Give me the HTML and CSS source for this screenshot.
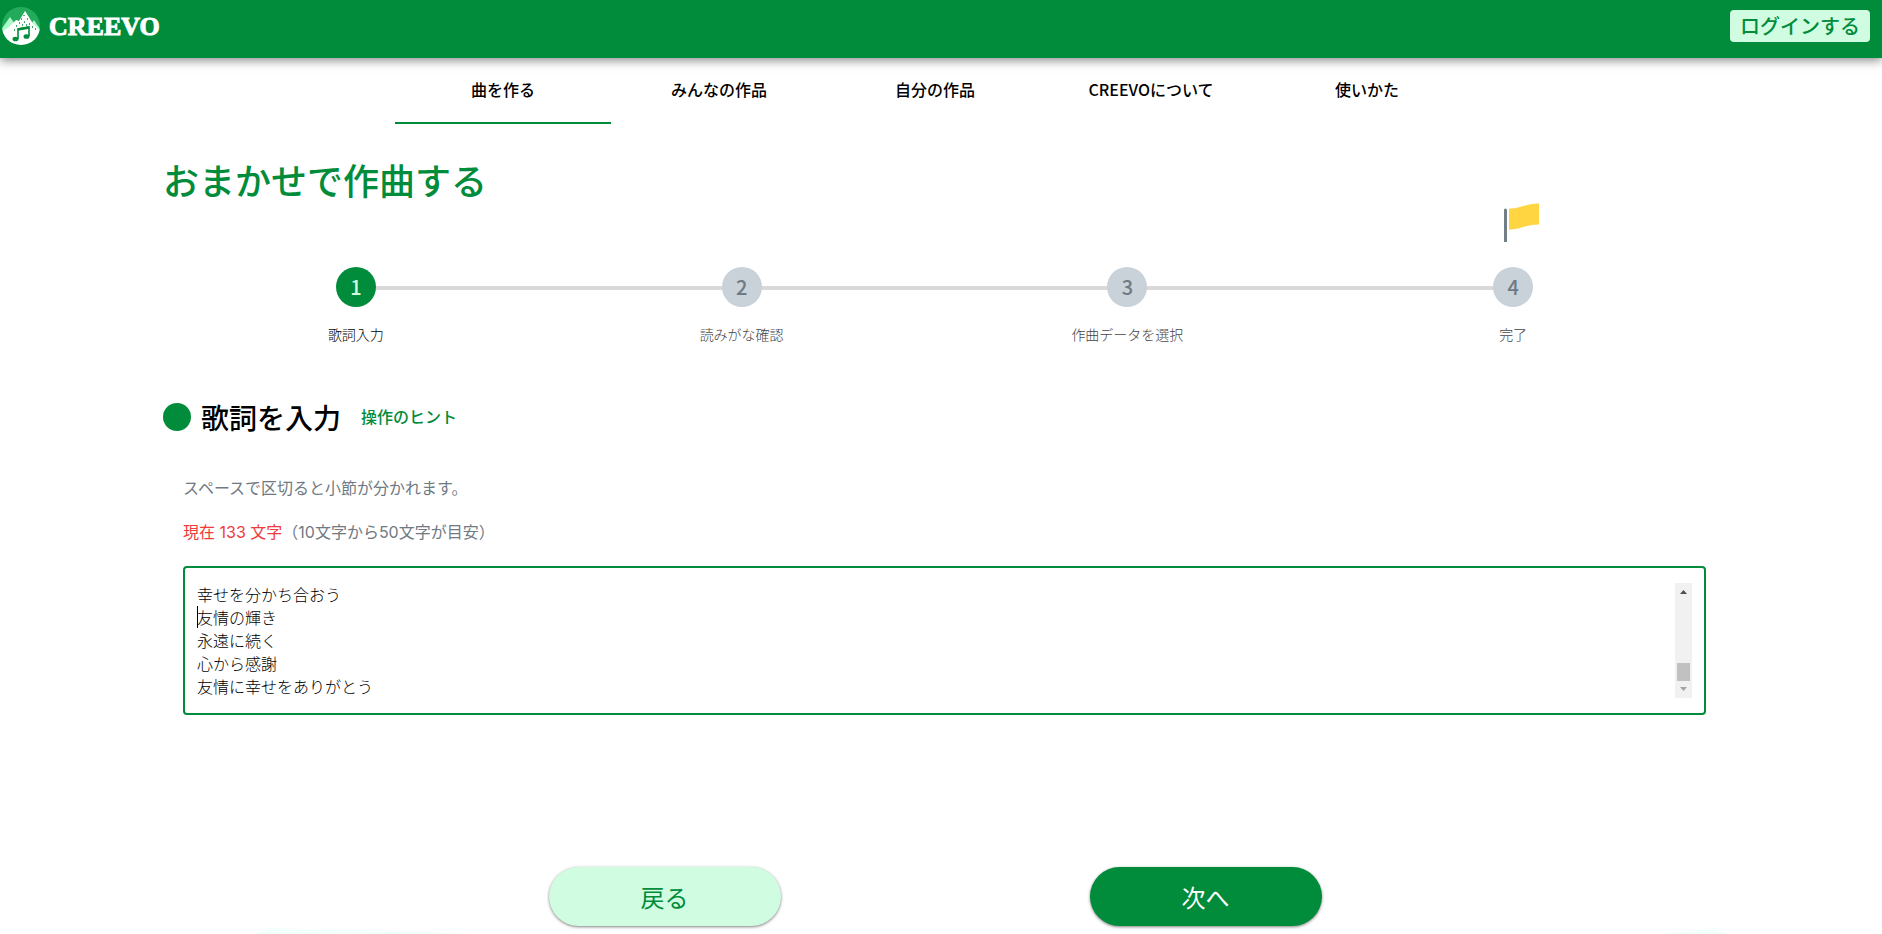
FILE: index.html
```
<!DOCTYPE html>
<html lang="ja">
<head>
<meta charset="utf-8">
<title>CREEVO</title>
<link rel="stylesheet" href="styles.css">
</head>
<body>
<header class="site-header">
  <a class="brand" href="#">
    <svg class="brand-mark" viewBox="0 0 38 38" aria-hidden="true">
      <defs><clipPath id="disc"><circle cx="19" cy="19" r="19"/></clipPath></defs>
      <g clip-path="url(#disc)">
        <rect width="38" height="38" fill="#23aa5b"/>
        <path d="M-2 24 8 10l7 10-5 18H-2zM26 22l6-9 8 12v10H26z" fill="#a9fbc9"/>
        <path d="M0 24l6-3 8-8 3 1 6-10 7 11 8 9v14H0z" fill="#fff"/>
        <path d="M22 8v1M19 12h1M25 12h1M17 16h1M22 15h1M27 17h1M14 19h1M20 18h1M24 18h1M30 20h1M12 23h1M33 22h1" stroke="#008c3a" stroke-width="1.3"/>
        <path d="M16 32V22l11-2v9" fill="none" stroke="#008c3a" stroke-width="1.6"/>
        <path d="M16 22.500l11-2" stroke="#008c3a" stroke-width="2.400"/>
        <ellipse cx="13.500" cy="32" rx="3" ry="2.300" fill="#008c3a"/>
        <ellipse cx="24.500" cy="29.500" rx="3" ry="2.300" fill="#008c3a"/>
      </g>
    </svg>
    <span class="brand-name">CREEVO</span>
  </a>
  <button class="login" type="button">ログインする</button>
</header>

<div class="page">
  <nav class="tabs">
    <a class="tab tab-active" href="#">曲を作る</a>
    <a class="tab" href="#">みんなの作品</a>
    <a class="tab" href="#">自分の作品</a>
    <a class="tab" href="#">CREEVOについて</a>
    <a class="tab" href="#">使いかた</a>
  </nav>

  <main class="content">
    <h1 class="title">おまかせで作曲する</h1>

    <ol class="steps">
      <li class="step step-current"><span class="step-number">1</span><span class="step-label">歌詞入力</span></li>
      <li class="step"><span class="step-number">2</span><span class="step-label">読みがな確認</span></li>
      <li class="step"><span class="step-number">3</span><span class="step-label">作曲データを選択</span></li>
      <li class="step">
        <svg class="flag" viewBox="0 0 36 40" aria-hidden="true">
          <path d="M1 39V7q0-1.500 1.500-1.500T4 7v32z" fill="#737f87"/>
          <path d="M6 5.500C18 6 22 .5 36 .5v21c-14 0-18 5-30 5z" fill="#ffd542"/>
        </svg>
        <span class="step-number">4</span><span class="step-label">完了</span>
      </li>
    </ol>

    <div class="section-head">
      <span class="dot"></span>
      <h2 class="section-title">歌詞を入力</h2>
      <a class="hint" href="#">操作のヒント</a>
    </div>

    <div class="lyrics">
      <p class="note">スペースで区切ると小節が分かれます。</p>
      <label class="note" for="lyrics"><span class="over">現在 133 文字</span>（10文字から50文字が目安）</label>
      <div class="editor">
        <textarea class="editor-text" id="lyrics" rows="5">幸せを分かち合おう
友情の輝き
永遠に続く
心から感謝
友情に幸せをありがとう</textarea>
        <span class="caret"></span>
        <svg class="scrollbar" viewBox="0 0 17 115" aria-hidden="true">
          <path d="M0 0h17v115H0z" fill="#f1f1f1"/>
          <path d="M5 11h7L8.500 7z" fill="#505050"/>
          <path d="M2 80h13v18H2z" fill="#c1c1c1"/>
          <path d="M5 104h7l-3.500 4z" fill="#a3a3a3"/>
        </svg>
      </div>
    </div>
  </main>

  <div class="actions">
    <button class="action action-back" type="button">戻る</button>
    <button class="action action-next" type="button">次へ</button>
  </div>
</div>

<svg class="hills" viewBox="0 0 1882 6" preserveAspectRatio="none" aria-hidden="true">
  <path d="M254 6 272 0 480 6zM1664 6l50-6 14 6z" fill="#f3fffa"/>
</svg>
</body>
</html>
```
FILE: styles.css
```
:root {
  --green: #008c3a;
  --mint: #d0fce2;
  --gray: #6f7a83;
}

* { box-sizing: border-box; }

body {
  margin: 0;
  min-height: 100vh;
  overflow: hidden;
  display: flex;
  flex-direction: column;
  background: #fff;
  color: #000;
  font-family: "Noto Sans CJK JP", sans-serif;
  font-size: 16px;
  line-height: 24px;
}

a { color: inherit; text-decoration: none; }
button, textarea { font: inherit; }
h1, h2, p, ol { margin: 0; padding: 0; }

.site-header {
  display: flex;
  align-items: center;
  justify-content: space-between;
  height: 58px;
  padding: 0 12px 6px 2px;
  background: var(--green);
  box-shadow: 0 2px 10px rgba(0, 0, 0, 0.5);
}

.brand {
  display: flex;
  align-items: center;
  gap: 9px;
  color: #fff;
}

.brand-mark { width: 38px; height: 38px; }

.brand-name {
  padding-top: 2px;
  font: bold 26px/38px "Liberation Serif", serif;
  -webkit-text-stroke: 1px #fff;
}

.login {
  height: 32px;
  padding: 0 10px;
  border: 0;
  border-radius: 4px;
  background: var(--mint);
  color: var(--green);
  font-size: 20px;
  font-weight: 500;
  line-height: 32px;
}

.page { padding-right: 12px; }

.tabs {
  display: grid;
  grid-template-columns: repeat(5, 1fr);
  max-width: 1080px;
  margin: 0 auto;
}

.tab {
  height: 66px;
  padding-top: 19px;
  border-bottom: 2px solid transparent;
  font-weight: 500;
  text-align: center;
}

.tab-active { border-color: var(--green); }

.content { margin: 0 164px 0 163px; }

.title {
  padding-top: 28px;
  color: var(--green);
  font-size: 36px;
  font-weight: 500;
  line-height: 54px;
}

.steps {
  display: grid;
  grid-template-columns: repeat(4, 1fr);
  padding-top: 61px;
  list-style: none;
}

.step {
  position: relative;
  display: flex;
  flex-direction: column;
  align-items: center;
  gap: 17px;
  color: var(--gray);
}

.step + .step::before {
  content: "";
  position: absolute;
  top: 19px;
  right: 50%;
  width: 100%;
  height: 4px;
  background: #d9d9d9;
}

.step-number {
  z-index: 1;
  width: 40px;
  height: 40px;
  border-radius: 50%;
  background: #c9d1d9;
  font-size: 20px;
  font-weight: 500;
  line-height: 40px;
  text-align: center;
}

.step-label {
  color: #444;
  font-size: 14px;
  font-weight: 300;
  line-height: 20px;
}

.step-current .step-number { background: var(--green); color: var(--mint); }
.step-current .step-label { color: #000; }

.flag {
  position: absolute;
  bottom: 100%;
  left: 50%;
  width: 36px;
  height: 40px;
  margin: 0 0 24px -10px;
}

.section-head {
  display: flex;
  align-items: center;
  padding-top: 52px;
}

.dot {
  width: 28px;
  height: 28px;
  margin-right: 10px;
  border-radius: 50%;
  background: var(--green);
}

.section-title {
  margin-right: 20px;
  font-size: 28px;
  font-weight: 500;
  line-height: 42px;
}

.hint { padding-bottom: 2px; color: var(--green); font-weight: 500; }

.lyrics {
  display: flex;
  flex-direction: column;
  gap: 20px;
  padding: 38px 0 0 20px;
}

.note {
  color: var(--gray);
  font-family: Inter, "Noto Sans CJK JP", sans-serif;
}

.over { color: #ef3b3b; }

.editor {
  position: relative;
  display: flex;
  margin-top: 2px;
  padding: 15px 12px;
  border: 2px solid var(--green);
  border-radius: 4px;
}

.editor-text {
  flex: 1;
  height: 115px;
  padding: 0;
  border: 0;
  outline: 0;
  resize: none;
  overflow: hidden;
  background: transparent;
  color: #000;
  font-weight: 300;
  line-height: 23px;
}

.caret {
  position: absolute;
  top: 38px;
  left: 12px;
  width: 1px;
  height: 22px;
  background: #000;
}

.scrollbar { width: 17px; height: 115px; }

.actions {
  display: grid;
  grid-template-columns: 1fr 1fr;
  justify-items: center;
  max-width: 1082px;
  margin: 0 auto;
  padding-top: 152px;
}

.action {
  width: 232px;
  height: 59px;
  border: 0;
  border-radius: 30px;
  box-shadow: 0 1px 3px rgba(0, 0, 0, 0.5);
  font-size: 24px;
  line-height: 54px;
}

.action-back { background: var(--mint); color: var(--green); }
.action-next { background: var(--green); color: #fff; }

.hills {
  display: block;
  width: 100%;
  height: 6px;
  margin-top: auto;
}
```
